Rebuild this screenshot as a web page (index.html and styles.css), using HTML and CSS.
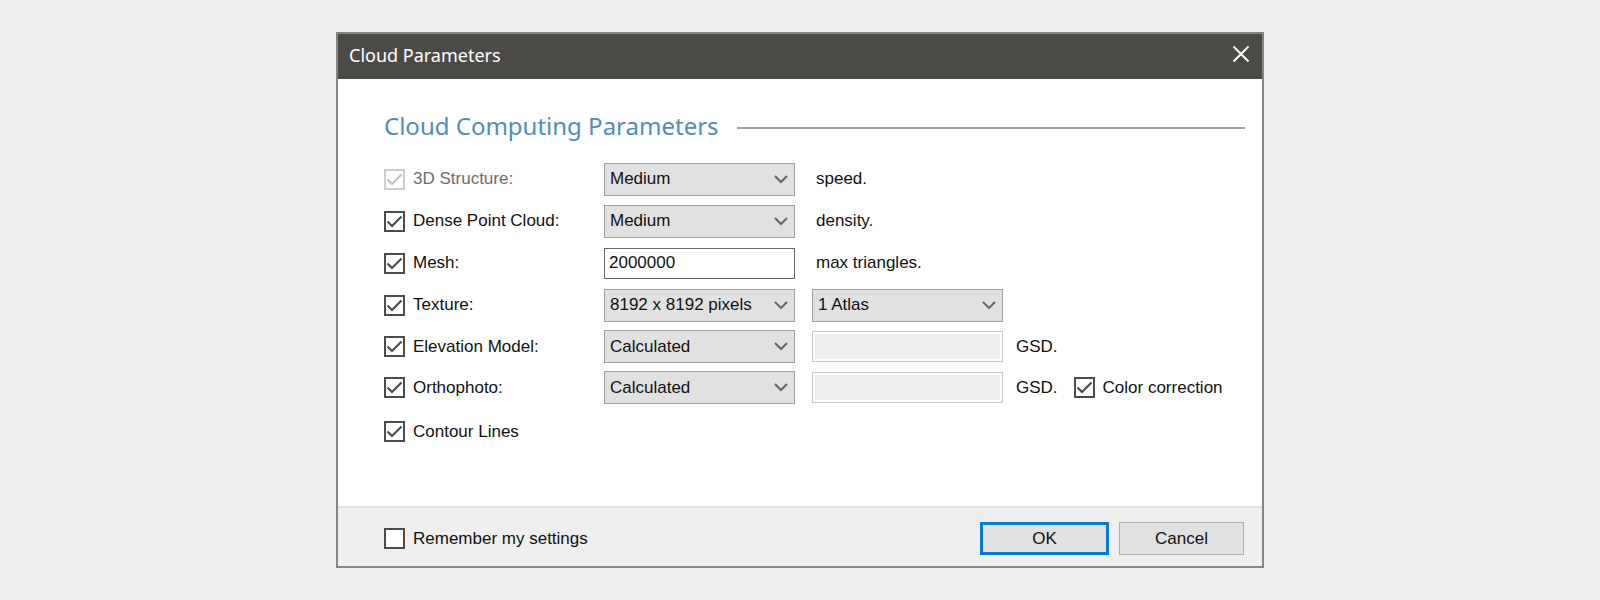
FILE: index.html
```
<!DOCTYPE html>
<html lang="en">
<head>
<meta charset="utf-8">
<meta name="viewport" content="width=device-width, initial-scale=1">
<title>Cloud Parameters</title>
<link rel="stylesheet" href="styles.css">
</head>
<body>
<form class="dialog" role="dialog" aria-labelledby="dialog-title">
  <header class="titlebar">
    <h1 class="title" id="dialog-title">Cloud Parameters</h1>
    <button class="close" type="button" aria-label="Close">
      <svg width="18" height="18" viewBox="0 0 18 18" fill="none" stroke="currentColor" stroke-width="2"><path d="M1.5 1.5l15 15M16.5 1.5l-15 15"/></svg>
    </button>
  </header>
  <main class="content">
    <div class="heading-row">
      <h2 class="heading">Cloud Computing Parameters</h2>
      <hr class="rule">
    </div>
    <div class="params">
      <label class="check check-disabled"><input class="box" type="checkbox" checked disabled>3D Structure:</label>
      <select class="field" aria-label="3D Structure speed"><option>Medium</option></select>
      <span class="unit">speed.</span>
      <span></span>

      <label class="check"><input class="box" type="checkbox" checked>Dense Point Cloud:</label>
      <select class="field" aria-label="Dense Point Cloud density"><option>Medium</option></select>
      <span class="unit">density.</span>
      <span></span>

      <label class="check"><input class="box" type="checkbox" checked>Mesh:</label>
      <input class="text" type="text" value="2000000" aria-label="Max triangles">
      <span class="unit">max triangles.</span>
      <span></span>

      <label class="check"><input class="box" type="checkbox" checked>Texture:</label>
      <select class="field" aria-label="Texture size"><option>8192 x 8192 pixels</option></select>
      <select class="field" aria-label="Atlas count"><option>1 Atlas</option></select>
      <span></span>

      <label class="check"><input class="box" type="checkbox" checked>Elevation Model:</label>
      <select class="field" aria-label="Elevation Model"><option>Calculated</option></select>
      <input class="text" type="text" id="elevation-gsd" disabled>
      <div class="extra">
        <label for="elevation-gsd">GSD.</label>
      </div>

      <label class="check"><input class="box" type="checkbox" checked>Orthophoto:</label>
      <select class="field" aria-label="Orthophoto"><option>Calculated</option></select>
      <input class="text" type="text" id="ortho-gsd" disabled>
      <div class="extra">
        <label for="ortho-gsd">GSD.</label>
        <label class="check"><input class="box" type="checkbox" checked>Color correction</label>
      </div>

      <label class="check"><input class="box" type="checkbox" checked>Contour Lines</label>
    </div>
  </main>
  <footer class="footer">
    <label class="check"><input class="box" type="checkbox">Remember my settings</label>
    <div class="actions">
      <button class="button button-default" type="submit">OK</button>
      <button class="button" type="button">Cancel</button>
    </div>
  </footer>
</form>
</body>
</html>
```
FILE: styles.css
```
* {
  box-sizing: border-box;
}

body {
  margin: 0;
  padding: 32px 16px;
  background: #efefef;
  color: #111;
  font: 17px/20px "Liberation Sans", Arial, sans-serif;
}

.dialog {
  width: 58%;
  min-width: 928px;
  margin: 0 auto;
  border: 2px solid #858585;
  background: #fff;
}

.titlebar {
  display: flex;
  align-items: center;
  justify-content: space-between;
  padding: 9px 12px 12px 11px;
  background: #4c4a47;
  color: #fff;
}

.title {
  margin: 0;
  font: 18px/24px "Noto Sans", "Open Sans", sans-serif;
}

.close {
  display: flex;
  padding: 0 0 2px;
  border: 0;
  background: none;
  color: #fff;
}

.content {
  padding: 27px 17px 51px 46px;
}

.heading-row {
  display: flex;
  align-items: center;
  gap: 18px;
  margin-bottom: 12px;
}

.heading {
  margin: 0;
  color: #4f8cc0;
  font: 24px/40px "Noto Sans", "Open Sans", sans-serif;
}

.rule {
  flex: 1;
  height: 2px;
  margin: 4px 0 0;
  border: 0;
  background: #a2a2a2;
}

.params {
  display: grid;
  grid-template-columns: 203px 191px 191px 1fr;
  grid-template-rows: repeat(4, 42px) repeat(2, 41px) 47px;
  column-gap: 17px;
  align-items: center;
}

.check {
  display: flex;
  align-items: center;
  gap: 8px;
  white-space: nowrap;
}

.check-disabled {
  color: #6d6d6d;
}

.box {
  appearance: none;
  flex: none;
  width: 21px;
  height: 21px;
  margin: 0;
  border: 2px solid #4c4c4c;
  background: #fff center no-repeat;
}

.box:checked {
  background-image: url("data:image/svg+xml,%3Csvg xmlns='http://www.w3.org/2000/svg' width='17' height='17' fill='none' stroke='%23484848' stroke-width='2'%3E%3Cpath d='M1.5 8.5l4.5 4.5L15.5 3.5'/%3E%3C/svg%3E");
}

.box:disabled {
  border-color: #ccc;
  background-image: url("data:image/svg+xml,%3Csvg xmlns='http://www.w3.org/2000/svg' width='17' height='17' fill='none' stroke='%23c0c0c0' stroke-width='2'%3E%3Cpath d='M1.5 8.5l4.5 4.5L15.5 3.5'/%3E%3C/svg%3E");
}

.field,
.text {
  width: 100%;
  margin: 0;
  border-radius: 0;
  color: inherit;
  font: inherit;
}

.field {
  appearance: none;
  height: 33px;
  padding: 0 30px 0 5px;
  border: 1px solid #a0a0a0;
  background: #e1e1e1 right 6px center no-repeat url("data:image/svg+xml,%3Csvg xmlns='http://www.w3.org/2000/svg' width='14' height='9' fill='none' stroke='%23666' stroke-width='2'%3E%3Cpath d='M1 1l6 6 6-6'/%3E%3C/svg%3E");
}

.text {
  height: 31px;
  padding: 0 4px;
  border: 1px solid #666;
  background: #fff;
}

.text:disabled {
  border: 1px solid #c6c6c6;
  background: #efefef;
  box-shadow: inset 0 0 0 2px #fff;
}

.unit {
  padding-left: 4px;
}

.extra {
  display: flex;
  align-items: center;
  gap: 16px;
  margin-left: -4px;
}

.footer {
  display: flex;
  align-items: center;
  justify-content: space-between;
  padding: 14px 18px 11px 46px;
  border-top: 2px solid #e1e1e1;
  background: #efefef;
}

.actions {
  display: flex;
  gap: 10px;
}

.button {
  width: 125px;
  height: 33px;
  padding: 0;
  border: 1px solid #adadad;
  background: #e1e1e1;
  color: inherit;
  font: inherit;
}

.button-default {
  width: 129px;
  border: 3px solid #0b79d5;
}
```
